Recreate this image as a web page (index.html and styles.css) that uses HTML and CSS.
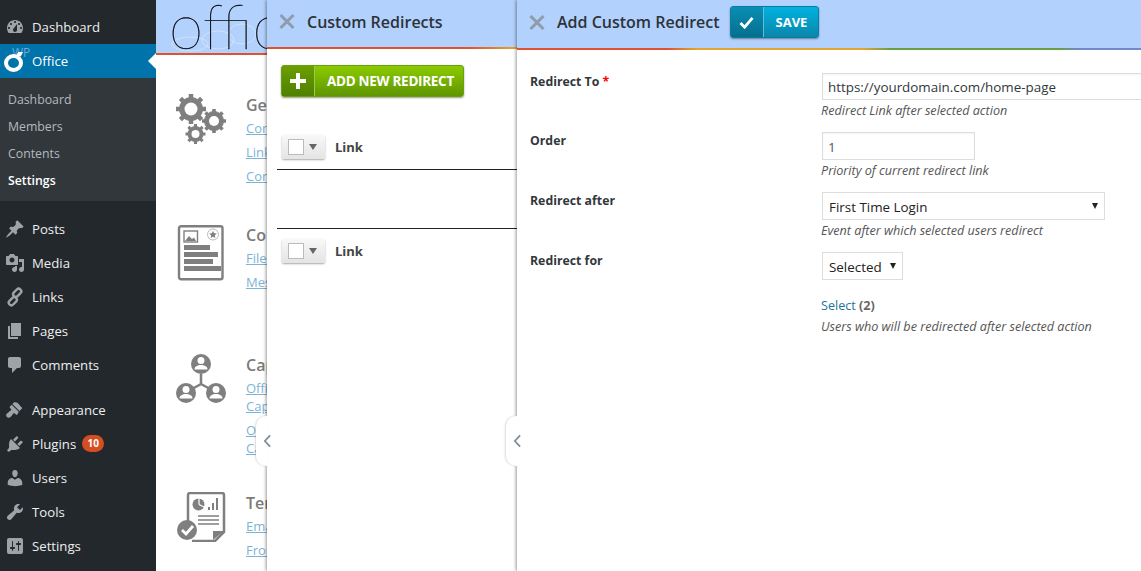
FILE: index.html
```html
<!DOCTYPE html>
<html lang="en">
<head>
  <meta charset="UTF-8">
  <title>Add Custom Redirect</title>
  <link rel="stylesheet" href="styles.css">
</head>
<body>
  <div class="app">

    <nav class="sidebar">
      <a class="menu-item first"><svg class="mi" viewBox="0 0 20 20"><path fill-rule="evenodd" d="M3.76 16h12.48c1.1-1.37 1.76-3.11 1.76-5 0-4.42-3.58-8-8-8s-8 3.58-8 8c0 1.89.66 3.63 1.76 5zM10 4c.55 0 1 .45 1 1s-.45 1-1 1-1-.45-1-1 .45-1 1-1zM6 6c.55 0 1 .45 1 1s-.45 1-1 1-1-.45-1-1 .45-1 1-1zm8 0c.55 0 1 .45 1 1s-.45 1-1 1-1-.45-1-1 .45-1 1-1zm-5.370 5.550L12 7v6c0 1.100-.9 2-2 2s-2-.9-2-2c0-.57.24-1.080.63-1.450zM4 10c.55 0 1 .45 1 1s-.45 1-1 1-1-.45-1-1 .45-1 1-1zm12 0c.55 0 1 .45 1 1s-.45 1-1 1-1-.45-1-1 .45-1 1-1z"/></svg>Dashboard</a>
      <a class="menu-item current">
        <span class="wpo-logo"><span class="wpo-wp">WP</span><span class="wpo-ring"></span></span>
        Office
      </a>
      <div class="submenu">
        <a>Dashboard</a>
        <a>Members</a>
        <a>Contents</a>
        <a class="on">Settings</a>
      </div>
      <div class="group">
        <a class="menu-item"><svg class="mi" viewBox="0 0 20 20"><path d="M10.440 3.020l1.820-1.820 6.360 6.350-1.830 1.820c-1.050-.68-2.480-.57-3.410.36l-.75.75c-.92.93-1.040 2.350-.35 3.410l-1.830 1.820-2.410-2.410-2.800 2.790c-.42.42-3.380 2.710-3.800 2.290s1.860-3.390 2.280-3.810l2.790-2.790L4.100 9.360l1.830-1.820c1.050.69 2.480.57 3.400-.36l.75-.75c.93-.92 1.050-2.350.36-3.410z"/></svg>Posts</a>
        <a class="menu-item"><svg class="mi" viewBox="0 0 20 20"><path fill-rule="evenodd" d="M13 11V4c0-.55-.45-1-1-1h-1.670L9 1H5L3.670 3H2c-.55 0-1 .45-1 1v7c0 .55.45 1 1 1h10c.55 0 1-.45 1-1zM7 4.500c1.380 0 2.500 1.120 2.500 2.500S8.380 9.500 7 9.500 4.500 8.380 4.500 7 5.620 4.500 7 4.500zM14 6h5v10.500c0 1.380-1.120 2.500-2.500 2.500S14 17.880 14 16.500s1.120-2.500 2.500-2.500c.17 0 .34.02.5.05V9h-3V6zm-4 8.050V13h2v3.500c0 1.380-1.120 2.500-2.500 2.500S7 17.880 7 16.500 8.120 14 9.500 14c.17 0 .34.02.5.05z"/></svg>Media</a>
        <a class="menu-item"><svg class="mi" viewBox="-2.500 -2.500 25 25"><g fill="none" stroke="#9ea3a8" stroke-width="3"><rect x="9.500" y="-1" width="6.500" height="11.500" rx="3.200" transform="rotate(45 12.750 4.750)"/><rect x="4" y="9.500" width="6.500" height="11.500" rx="3.200" transform="rotate(45 7.250 15.250)"/></g></svg>Links</a>
        <a class="menu-item"><svg class="mi" viewBox="0 0 20 20"><path d="M6 15V2h10v13H6zm-1 1h8v2H3V5h2v11z"/></svg>Pages</a>
        <a class="menu-item"><svg class="mi" viewBox="0 0 20 20"><path d="M5 2h9c1.100 0 2 .9 2 2v7c0 1.100-.9 2-2 2h-2l-5 5v-5H5c-1.100 0-2-.9-2-2V4c0-1.100.9-2 2-2z"/></svg>Comments</a>
      </div>
      <div class="group">
        <a class="menu-item"><svg class="mi" viewBox="0 0 20 20"><path d="M14.480 11.060L7.410 3.990l1.500-1.500c.5-.56 2.300-.47 3.510.32.46.29.76.59 1.150 1.190.4.6 1.310.74 1.500 2 .23.27.56.4.97.66.76.5 1.090 1.120 1.140 1.590zm-.71.7L6.700 4.700 4.930 6.470c-.39.39-.39 1.020 0 1.410l1.060 1.060c.39.39.39 1.030 0 1.420-.6.6-1.430 1.110-2.210 1.690-.35.26-.7.53-1.010.84C1.430 13.430.990 14.600 1.300 16c.3.800.8 1.300 1.400 1.600 1.300.3 2.400-.1 3.100-.8.3-.3.6-.7.9-1.100.6-.8 1.100-1.500 1.700-2.200.4-.4 1.100-.4 1.400 0l1.100 1.100c.4.4 1 .4 1.400 0z"/></svg>Appearance</a>
        <a class="menu-item"><svg class="mi" viewBox="0 0 20 20"><path d="M13.110 4.360L9.870 7.600 8 5.730l3.240-3.240c.35-.34 1.050-.2 1.560.31.52.52.66 1.210.31 1.560zm-8 1.770l.91-1.120 9.010 9.010-1.190.84c-.71.71-2.630 1.160-3.820 1.160H6.140L4.900 17.260c-.59.59-1.540.59-2.120 0-.59-.58-.59-1.530 0-2.120l1.240-1.240v-3.880c0-1.130.52-3.130 1.090-3.890zm7.260 3.970l3.240-3.240c.34-.35 1.040-.21 1.560.31.51.51.65 1.210.31 1.560l-3.240 3.240z"/></svg>Plugins<span class="count">10</span></a>
        <a class="menu-item"><svg class="mi" viewBox="0 0 20 20"><path d="M10 9.250c-2.270 0-2.730-3.440-2.730-3.440C7 4.020 7.820 2 9.970 2c2.160 0 2.980 2.020 2.710 3.810 0 0-.41 3.440-2.680 3.440zm0 2.570L12.720 10c2.390 0 4.520 2.330 4.520 4.530v2.490s-3.650 1.130-7.240 1.130c-3.650 0-7.240-1.130-7.240-1.130v-2.490c0-2.250 1.940-4.480 4.470-4.480z"/></svg>Users</a>
        <a class="menu-item"><svg class="mi" viewBox="0 0 20 20"><path d="M16.680 9.770c-1.340 1.340-3.300 1.670-4.950.99l-5.410 6.520c-.99.99-2.590.99-3.580 0s-.99-2.590 0-3.570l6.520-5.420c-.68-1.650-.35-3.610.99-4.950 1.280-1.280 3.120-1.620 4.720-1.060l-2.890 2.890 2.820 2.820 2.860-2.860c.53 1.580.18 3.400-1.080 4.640z"/></svg>Tools</a>
        <a class="menu-item"><svg class="mi" viewBox="0 0 20 20"><path fill-rule="evenodd" d="M18 16V4c0-1.100-.9-2-2-2H4c-1.100 0-2 .9-2 2v12c0 1.100.9 2 2 2h12c1.100 0 2-.9 2-2zM8 11h1c.55 0 1 .45 1 1s-.45 1-1 1H8v1.500c0 .28-.22.5-.5.5s-.5-.22-.5-.5V13H6c-.55 0-1-.45-1-1s.45-1 1-1h1V5.500c0-.28.22-.5.5-.5s.5.22.5.5V11zm5-2h-1c-.55 0-1-.45-1-1s.45-1 1-1h1V5.500c0-.28.22-.5.5-.5s.5.22.5.5V7h1c.55 0 1 .45 1 1s-.45 1-1 1h-1v5.500c0 .28-.22.5-.5.5s-.5-.22-.5-.5V9z"/></svg>Settings</a>
      </div>
    </nav>

    <div class="backdrop">
      <div class="backdrop-head">
        <svg class="clouds" viewBox="0 0 111 55" width="111" height="55"><g fill="none" stroke="#fff" stroke-opacity=".35"><ellipse cx="34" cy="44" rx="18" ry="7"/><ellipse cx="62" cy="40" rx="16" ry="9"/><ellipse cx="86" cy="34" rx="14" ry="10"/></g></svg>
        <span class="backdrop-logo">office</span>
      </div>
      <section class="tile tile-general">
        <svg class="tile-icon" viewBox="0 0 50 50">
          <g fill="#7f7f7f" stroke="#7f7f7f">
            <circle cx="15" cy="15" r="11.500"/>
            <path stroke-width="4.500" d="M15 0v30M0 15h30M4.400 4.400l21.200 21.200M25.600 4.400L4.400 25.600"/>
            <circle cx="38" cy="27" r="9.500"/>
            <path stroke-width="3.600" d="M38 15v24M26 27h24M29.500 18.500l17 17M46.500 18.500l-17 17"/>
            <circle cx="19.500" cy="40" r="7.500"/>
            <path stroke-width="3" d="M19.500 30v20M9.500 40h20M12.400 32.900l14.200 14.200M26.600 32.900L12.400 47.100"/>
          </g>
          <circle cx="15" cy="15" r="6.500" fill="#fff"/>
          <circle cx="38" cy="27" r="5" fill="#fff"/>
          <circle cx="19.500" cy="40" r="4" fill="#fff"/>
        </svg>
        <div class="tile-text">
          <h3>General</h3>
          <a>Company</a>
          <a>Links</a>
          <a>Contact</a>
        </div>
      </section>
      <section class="tile tile-content">
        <svg class="tile-icon" viewBox="1 0 50 56">
          <rect x="4" y="1.200" width="43.500" height="53" rx="2" fill="none" stroke="#7f7f7f" stroke-width="2.400"/>
          <rect x="9" y="6" width="13.500" height="11" fill="none" stroke="#7f7f7f" stroke-width="1.400"/>
          <path d="M10 16l4-5 3 3 2-1.500 2 3.500z" fill="#7f7f7f"/>
          <circle cx="38" cy="9.500" r="5.500" fill="none" stroke="#bbb" stroke-width="1"/>
          <path d="M38 5.800l1.100 2.500 2.700.3-2 1.800.6 2.700-2.400-1.400-2.400 1.400.6-2.700-2-1.800 2.700-.3z" fill="#7f7f7f"/>
          <path fill="#7f7f7f" d="M9 20h26v5H9zM9 27h34v5H9zM9 34h29v5H9zM9 41h37v5H9z"/>
        </svg>
        <div class="tile-text">
          <h3>Content</h3>
          <a>Files</a>
          <a>Messages</a>
        </div>
      </section>
      <section class="tile tile-cap">
        <svg class="tile-icon" viewBox="0 0 50 50">
          <g fill="#7f7f7f">
            <circle cx="25" cy="10" r="10"/>
            <circle cx="10" cy="39" r="10"/>
            <circle cx="40" cy="39" r="10"/>
          </g>
          <path d="M25 20v10l-9 5M25 30l9 5" fill="none" stroke="#7f7f7f" stroke-width="2.500"/>
          <g fill="#fff">
            <circle cx="25" cy="6.500" r="3.500"/>
            <path d="M18.500 15.500c0-3 3-4.500 6.500-4.500s6.500 1.500 6.500 4.500z"/>
            <circle cx="10" cy="35.500" r="3.500"/>
            <path d="M3.500 44.500c0-3 3-4.500 6.500-4.500s6.500 1.500 6.500 4.500z"/>
            <circle cx="40" cy="35.500" r="3.500"/>
            <path d="M33.500 44.500c0-3 3-4.500 6.500-4.500s6.500 1.500 6.500 4.500z"/>
          </g>
        </svg>
        <div class="tile-text">
          <h3>Capabilities</h3>
          <a>Office</a>
          <a>Capabilities</a>
          <a class="tight-top">Office</a>
          <a>Capabilities</a>
        </div>
      </section>
      <section class="tile tile-tpl">
        <svg class="tile-icon" viewBox="0 0 50 50">
          <path d="M12 30V3a2 2 0 0 1 2-2h32a2 2 0 0 1 2 2v37l-9 9H16" fill="none" stroke="#7f7f7f" stroke-width="2.500"/>
          <path d="M37 48v-9h11z" fill="#7f7f7f"/>
          <circle cx="22.500" cy="12.500" r="6" fill="#7f7f7f"/>
          <path d="M23 12.500V5.500M23 12.500l6 3" stroke="#fff" stroke-width="1.200" fill="none"/>
          <path d="M32 18h2v-3h-2zM36 18h2V11h-2zM40 18h2V6h-2z" fill="#7f7f7f"/>
          <path d="M22 24h21M22 28h21M22 32h21" stroke="#7f7f7f" stroke-width="1.600"/>
          <circle cx="11" cy="38" r="10" fill="#7f7f7f"/>
          <path d="M6 38l4 4 7-8" fill="none" stroke="#fff" stroke-width="2.800"/>
        </svg>
        <div class="tile-text">
          <h3>Templates</h3>
          <a>Email</a>
          <a>From</a>
        </div>
      </section>
    </div>

    <aside class="panel panel-list">
      <header class="panel-head">
        <svg class="close" viewBox="0 0 16 15"><path d="M1.500 1l13 13M14.500 1l-13 13"/></svg>
        <h2>Custom Redirects</h2>
      </header>
      <div class="panel-body">
        <a class="btn btn-green"><span class="btn-ico">
          <svg viewBox="0 0 16 16" width="16" height="16"><path d="M6 0h4v6h6v4h-6v6H6v-6H0V6h6z" fill="#fff"/></svg>
        </span><span class="btn-label">ADD NEW REDIRECT</span></a>
        <div class="list-row">
          <span class="check-drop"><span class="check"></span><span class="caret"></span></span>
          <strong>Link</strong>
        </div>
        <div class="list-gap"></div>
        <div class="list-row">
          <span class="check-drop"><span class="check"></span><span class="caret"></span></span>
          <strong>Link</strong>
        </div>
      </div>
      <span class="collapse"><svg viewBox="0 0 10 16" width="9" height="14"><path d="M8 1.500L2 8l6 6.500" fill="none" stroke="#7f8c99" stroke-width="2"/></svg></span>
    </aside>

    <main class="panel panel-form">
      <header class="panel-head">
        <svg class="close" viewBox="0 0 16 15"><path d="M1.500 1l13 13M14.500 1l-13 13"/></svg>
        <h2>Add Custom Redirect</h2>
        <a class="btn btn-blue"><span class="btn-ico">
          <svg viewBox="0 0 16 14" width="15" height="13"><path d="M1.500 7.500l4.500 4.500 8.500-10" fill="none" stroke="#fff" stroke-width="3"/></svg>
        </span><span class="btn-label">SAVE</span></a>
      </header>
      <form class="form-body">
        <div class="field field-first">
          <label>Redirect To <span class="req">*</span></label>
          <div class="control">
            <div class="input wide">https://yourdomain.com/home-page</div>
            <p class="hint">Redirect Link after selected action</p>
          </div>
        </div>
        <div class="field">
          <label>Order</label>
          <div class="control">
            <div class="input short">1</div>
            <p class="hint">Priority of current redirect link</p>
          </div>
        </div>
        <div class="field">
          <label>Redirect after</label>
          <div class="control">
            <div class="input select long">First Time Login<span class="arrow"></span></div>
            <p class="hint">Event after which selected users redirect</p>
          </div>
        </div>
        <div class="field">
          <label>Redirect for</label>
          <div class="control">
            <div class="input select tiny">Selected<span class="arrow"></span></div>
            <p class="select-link"><a>Select</a> <b>(2)</b></p>
            <p class="hint">Users who will be redirected after selected action</p>
          </div>
        </div>
      </form>
      <span class="collapse"><svg viewBox="0 0 10 16" width="9" height="14"><path d="M8 1.500L2 8l6 6.500" fill="none" stroke="#7f8c99" stroke-width="2"/></svg></span>
    </main>

  </div>
</body>
</html>
```

FILE: styles.css
```css
* { box-sizing: border-box; }
html, body { margin: 0; height: 100%; overflow: hidden; background: #fff; }
body { font-family: "Open Sans", "Noto Sans", sans-serif; font-size: 13px; color: #444; }
p, h2, h3 { margin: 0; }

.app { display: flex; height: 571px; width: 1141px; overflow: hidden; }

/* wp admin menu */
.sidebar { width: 156px; flex: none; background: #23282d; color: #eee; font-size: 13.2px; }
.menu-item { display: flex; align-items: center; height: 34px; padding: 0 0 1px 5px; color: #eee; }
.menu-item.first { margin-top: 10px; }
.mi { width: 20px; height: 20px; margin-right: 7px; flex: none; fill: #9ea3a8; }
.submenu + .group { margin-top: 11px; }
.group + .group { margin-top: 11px; }
.current { position: relative; background: #0073aa; color: #fff; padding-left: 4px; }
.current::after { content: ""; position: absolute; right: 0; top: 9px; border: 8px solid transparent; border-right-color: #fff; border-left: 0; }
.wpo-logo { position: relative; width: 20px; height: 34px; margin-right: 8px; flex: none; }
.wpo-wp { position: absolute; left: 8px; top: 1px; font-size: 12px; line-height: 16px; color: #6ea6d8; }
.wpo-ring { position: absolute; left: 0; top: 10px; width: 19px; height: 18px; border: 4.500px solid #fff; border-radius: 50%; }
.wpo-ring::after { content: ""; position: absolute; right: -3px; top: -6px; width: 5px; height: 4px; background: #fff; transform: skewX(-30deg); }
.submenu { background: #32373c; height: 123px; padding-top: 8px; font-size: 12.300px; color: #b4b9be; }
.submenu a { display: block; height: 27px; line-height: 27px; padding-left: 8px; }
.submenu .on { color: #fff; font-weight: 600; }
.count { margin-left: 6px; width: 22px; height: 17px; line-height: 17px; text-align: center; border-radius: 9px; background: #d54e21; color: #fff; font-size: 10px; font-weight: 700; }

/* office settings page behind the panels */
.backdrop { width: 111px; flex: none; overflow: hidden; }
.backdrop-head { position: relative; height: 55px; background: #b3d1fd; border-bottom: 2px solid #e0512f; overflow: hidden; white-space: nowrap; }
.clouds { position: absolute; left: 0; top: 0; }
.backdrop-logo { position: relative; display: block; margin: -6px 0 0 13px; font-family: "Lato", "Open Sans", sans-serif; font-weight: 100; font-size: 62px; line-height: 62px; color: #000; -webkit-text-stroke: .3px #000; }
.tile { display: flex; padding-left: 20px; white-space: nowrap; }
.tile-icon { width: 50px; flex: none; margin-right: 20px; }
.tile-general { margin-top: 39px; height: 130px; }
.tile-general .tile-icon { height: 50px; }
.tile-content { height: 130px; }
.tile-content .tile-icon { height: 56px; margin-top: 1px; }
.tile-cap { height: 138px; }
.tile-cap .tile-icon { height: 50px; }
.tile-tpl .tile-icon { height: 50px; }
.tile-text h3 { font-size: 16px; font-weight: 600; color: #7b7b7b; line-height: 22px; }
.tile-text a { display: block; color: #7cb4d6; text-decoration: underline; font-size: 13px; line-height: 24px; }
.tile-cap h3 { margin-bottom: 3px; }
.tile-cap .tile-text a { line-height: 18px; }
.tile-text .tight-top { margin-top: 5.500px; }

/* slide-in panels */
.panel { position: relative; flex: none; background: #fff; box-shadow: -1px 0 3px rgba(0, 0, 0, .4); }
.panel-list { width: 250px; }
.panel-form { width: 624px; }
.panel-head { display: flex; align-items: center; background: #b3d1fd; padding-left: 12px; padding-bottom: 4px; border-bottom: 2px solid; }
.panel-list .panel-head { height: 49px; border-image: linear-gradient(90deg, #e0512f 0, #e0512f 200px, #e3a72f 250px) 1; }
.panel-form .panel-head { height: 50px; border-image: linear-gradient(90deg, #e0512f 0, #e0512f 150px, #e2a530 180px, #e2a530 346px, #68a041 373px, #68a041 540px, #6f8bc9 563px) 1; }
.close { width: 16px; height: 15px; flex: none; margin-right: 12px; fill: none; stroke: #8f9cab; stroke-width: 3; }
.panel-head h2 { font-size: 16px; font-weight: 600; color: #2c3338; }

.btn { display: inline-flex; align-items: stretch; color: #fff; font-weight: 700; border-radius: 3px; box-shadow: 0 1px 2px rgba(0, 0, 0, .4); }
.btn-ico { display: flex; align-items: center; justify-content: center; }
.btn-green { width: 183px; height: 32px; background: linear-gradient(#8bcb00, #5f9600); border: 1px solid #6b9f0e; font-size: 13.500px; }
.btn-green .btn-ico { width: 33px; background: linear-gradient(#6b9f00, #4f8000); border-right: 1px solid #9bc94a; }
.btn-green .btn-label { padding-left: 12px; line-height: 30px; letter-spacing: -.3px; }
.btn-blue { width: 89px; height: 32px; margin-left: 10px; background: linear-gradient(#00b2e0, #0a86ab); border: 1px solid #0a7c9f; font-size: 13px; }
.btn-blue .btn-ico { width: 33px; background: linear-gradient(#0a8eb4, #056f8e); border-right: 1px solid #5cc0dc; }
.btn-blue .btn-label { padding-left: 12px; line-height: 30px; }

.panel-body { padding: 16px 0 0 14px; }
.list-row { display: flex; align-items: center; height: 26px; margin-left: 1px; margin-top: 37px; }
.list-row strong { margin-left: 10px; font-size: 13px; font-weight: 700; color: #444; }
.check-drop { display: flex; align-items: center; width: 43px; height: 24px; padding-left: 6px; background: linear-gradient(#f8f8f8, #e4e4e4); border-radius: 2px; box-shadow: 0 1px 2px rgba(0, 0, 0, .35); }
.check { width: 16px; height: 16px; background: #fff; border: 1px solid #bbb; }
.caret { margin-left: 5px; border: 4px solid transparent; border-top: 6px solid #666; border-bottom: 0; }
.list-gap { height: 60px; margin: 9px 0 9px -4px; border-top: 1px solid #222; border-bottom: 1px solid #222; }
.list-gap + .list-row { margin-top: 9px; }

.collapse { position: absolute; left: -11px; top: 416px; display: flex; align-items: center; justify-content: center; width: 11px; height: 50px; background: #fff; border-radius: 10px 0 0 10px; box-shadow: -1px 0 2px rgba(0, 0, 0, .15); }
.collapse svg { flex: none; margin-left: 12px; }

/* form */
.form-body { padding: 20px 0 0 13px; }
.field { display: flex; height: 60px; }
.field-first { height: 59px; }
.field label { width: 291px; flex: none; font-size: 12.300px; font-weight: 700; color: #32373c; padding-top: 3px; line-height: 18px; }
.req { color: #f00; }
.control { padding-top: 3px; }
.input { height: 28px; line-height: 28px; margin-left: 1px; padding-left: 5px; background: #fff; border: 1px solid #ddd; font-size: 13.400px; color: #32373c; white-space: nowrap; box-shadow: inset 0 1px 2px rgba(0, 0, 0, .05); }
.field-first .input { height: 27px; line-height: 27px; }
.wide { width: 340px; }
.short { width: 153px; color: #555; }
.select { position: relative; padding-left: 6px; color: #222; box-shadow: none; }
.long { width: 283px; }
.tiny { width: 81px; }
.arrow { position: absolute; right: 6px; top: 10px; border: 3px solid transparent; border-top: 6px solid #222; border-bottom: 0; }
.hint { font-style: italic; font-size: 12.600px; line-height: 18px; color: #555; margin-top: 2px; }
.select-link { margin-top: 17px; font-size: 12.600px; line-height: 18px; }
.select-link a { color: #21759b; }
.select-link b { color: #666; }
.select-link + .hint { margin-top: 3px; }
```
